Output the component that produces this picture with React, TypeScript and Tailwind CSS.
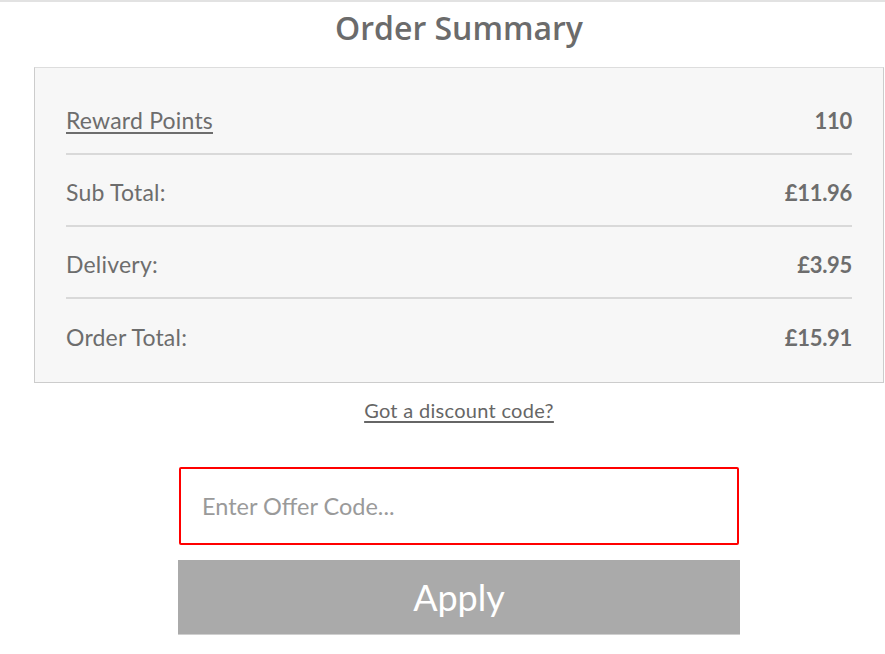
import React from "react"

const rows = [
    { label: "Reward Points", value: "110", link: true },
    { label: "Sub Total:", value: "£11.96" },
    { label: "Delivery:", value: "£3.95" },
    { label: "Order Total:", value: "£15.91" },
]

export default function App() {
    return (
        <main className="min-h-[654px] bg-white border-t-2 border-[#e2e2e2] text-[#6d6d6d]" style={{ fontFamily: "Lato, 'Open Sans', sans-serif" }}>
            <div className="ml-[34px] w-[850px]">
                <h1 className="h-[58px] pt-[6px] text-center text-[32px] font-semibold leading-[40px] text-[#6b6b6b]" style={{ fontFamily: "'Open Sans', sans-serif" }}>
                    Order Summary
                </h1>
                <section className="mt-[7px] border border-[#cccccc] border-t-[#dddddd] bg-[#f7f7f7] px-[31px] pt-[15px] pb-[11px]">
                    {rows.map((row, i) => (
                        <div key={row.label} className={`flex h-[72px] items-center justify-between pt-[4px] ${i < rows.length - 1 ? "border-b-2 border-[#d9d9d9]" : ""}`}>
                            {row.link ? (
                                <a href="#" className="text-[23px] tracking-[0.2px] underline decoration-[1.5px] underline-offset-[3px]">{row.label}</a>
                            ) : (
                                <span className="text-[23px] tracking-[0.2px]">{row.label}</span>
                            )}
                            <span className="text-[22px] font-bold tracking-[-0.3px]">{row.value}</span>
                        </div>
                    ))}
                </section>
                <div className="mt-[12px] text-center">
                    <a href="#" className="text-[20px] tracking-[0.3px] underline underline-offset-[3px] text-[#666]">Got a discount code?</a>
                </div>
                <div className="mx-auto mt-[42px] w-[562px]">
                    <input
                        type="text"
                        placeholder="Enter Offer Code..."
                        className="block h-[78px] w-[560px] mx-auto rounded-[2px] border-2 border-[#ff0000] bg-white px-[21px] text-[23.5px] text-[#555] placeholder:text-[#9a9a9a] outline-none"
                    />
                    <button className="mt-[15px] block h-[75px] w-[562px] border-b border-[#cfcfcf] bg-[#aaaaaa] text-[36px] text-white">
                        Apply
                    </button>
                </div>
            </div>
        </main>
    )
}
